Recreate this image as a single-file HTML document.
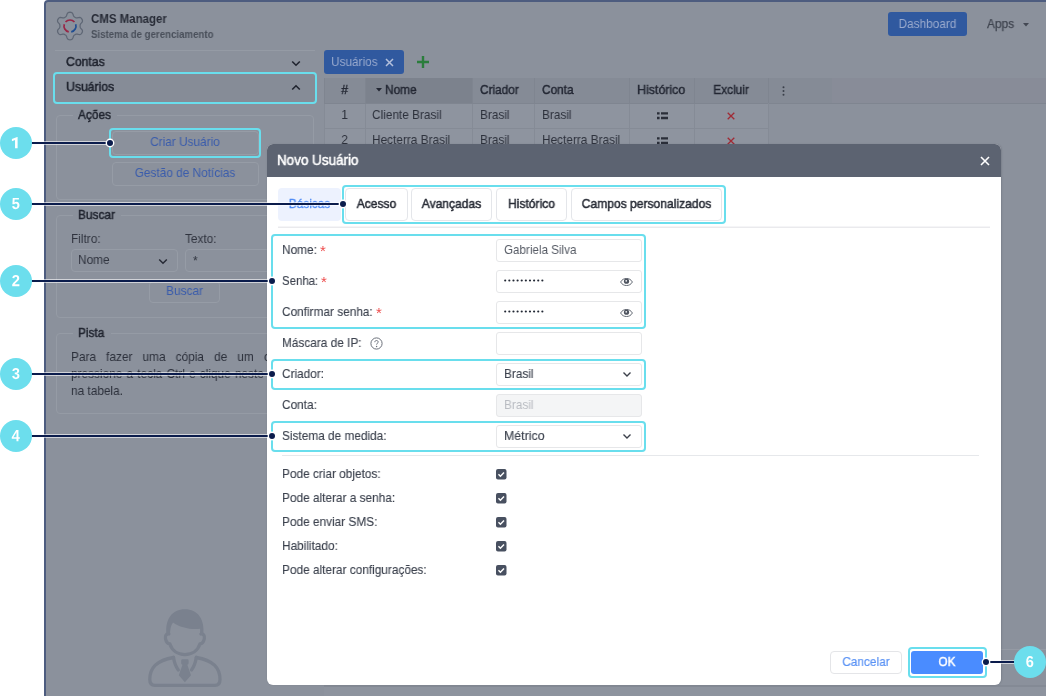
<!DOCTYPE html>
<html>
<head>
<meta charset="utf-8">
<title>CMS Manager</title>
<style>
*{box-sizing:border-box;margin:0;padding:0}
html,body{width:1046px;height:696px;overflow:hidden;background:#fff}
body{font-family:"Liberation Sans",sans-serif;font-size:13px;color:#2b2f3a;position:relative}
.abs{position:absolute}
#app{position:absolute;left:44px;top:0px;width:1010px;height:705px;background:#8b919c;border:2px solid #4d5c7f;border-radius:4px 0 0 0}
/* text helper: absolutely positioned, vertically centred on its top+8 line */
.t{will-change:transform;position:absolute;white-space:nowrap;line-height:16px;height:16px;font-size:13px;transform-origin:0 50%;transform:scaleX(.91)}
.tc{will-change:transform;position:absolute;white-space:nowrap;line-height:16px;height:16px;font-size:13px;text-align:center;transform-origin:50% 50%;transform:scaleX(.91)}
.m{-webkit-text-stroke:.42px currentColor}
.hl{position:absolute;border:2px solid #69deed;border-radius:4px}
.line{position:absolute;height:2px;background:#0b1c4c;box-shadow:0 0 0 .6px #fff}
.dot{position:absolute;width:6px;height:6px;border-radius:50%;background:#0b1c4c;box-shadow:0 0 0 1.400px #fff}
.num{position:absolute;width:32px;height:32px;border-radius:50%;background:#6cdeed;color:#fff;font-weight:400;-webkit-text-stroke:.65px #fff;font-size:15px;line-height:31px;text-align:center}
/* dimmed app */
.fs{position:absolute;border:1px solid #959ba5;border-radius:4px}
.lg{position:absolute;background:#8b919c;height:14px}
.btn{position:absolute;border:1px solid #969ca6;border-radius:4px}
.th{position:absolute;top:78px;height:25px;background:#858b96;border-left:1px solid #7f8590}
.td{position:absolute;height:25px;background:#8e949f;border-left:1px solid #858b96;border-bottom:1px solid #858b96}
/* dialog */
#dlg{position:absolute;left:267px;top:144px;width:734px;height:541px;background:#fff;border-radius:6px;overflow:hidden;box-shadow:.5px 0 1.500px rgba(45,50,65,.16)}
#dlgt{position:absolute;left:0;top:0;width:734px;height:33px;background:#5c6371}
.tab{position:absolute;top:188px;height:33px;border:1px solid #e4e6ea;border-radius:4px;background:#fff}
.inp{position:absolute;left:496px;width:146px;height:23px;border:1px solid #e6e7e9;border-radius:3px;background:#fff}
.cb{position:absolute;left:496px;width:11px;height:11px;border-radius:2px;background:#454d5b}
</style>
</head>
<body>

<div id="app"></div>

<!-- ===== header ===== -->
<svg class="abs" style="left:56px;top:11px" width="28" height="30" viewBox="0 0 28 30">
  <path d="M24.1 15.0L24.1 14.3L24.2 13.7L24.6 12.9L25.5 11.9L26.3 10.8L26.5 9.8L26.3 8.9L25.9 8.1L25.4 7.4L24.7 6.8L23.8 6.4L22.4 6.6L21.1 6.9L20.3 6.9L19.6 6.6L19.0 6.3L18.5 5.9L17.9 5.5L17.5 4.8L17.1 3.5L16.5 2.3L15.8 1.6L14.9 1.3L14.0 1.2L13.1 1.3L12.2 1.6L11.5 2.3L10.9 3.5L10.5 4.8L10.1 5.5L9.5 5.9L9.0 6.3L8.4 6.6L7.7 6.9L6.9 6.9L5.6 6.6L4.2 6.4L3.3 6.8L2.6 7.4L2.1 8.1L1.7 8.9L1.5 9.8L1.7 10.8L2.5 11.9L3.4 12.9L3.8 13.7L3.9 14.3L3.9 15.0L3.9 15.7L3.8 16.3L3.4 17.1L2.5 18.1L1.7 19.2L1.5 20.2L1.7 21.1L2.1 21.9L2.6 22.6L3.3 23.2L4.2 23.6L5.6 23.4L6.9 23.1L7.7 23.1L8.4 23.4L9.0 23.7L9.5 24.1L10.1 24.5L10.5 25.2L10.9 26.5L11.5 27.7L12.2 28.4L13.1 28.7L14.0 28.8L14.9 28.7L15.8 28.4L16.5 27.7L17.1 26.5L17.5 25.2L17.9 24.5L18.5 24.1L19.0 23.7L19.6 23.4L20.3 23.1L21.1 23.1L22.4 23.4L23.8 23.6L24.7 23.2L25.4 22.6L25.9 21.9L26.3 21.1L26.5 20.2L26.3 19.2L25.5 18.1L24.6 17.1L24.2 16.3L24.1 15.7Z" fill="none" stroke="#5f6775" stroke-width="1.250" stroke-linejoin="round"/>
  <path d="M18.46 10.99A6 6 0 0 0 9.54 10.99" fill="none" stroke="#982646" stroke-width="1.700"/>
  <path d="M8.29 13.15A6 6 0 0 0 12.75 20.87" fill="none" stroke="#982646" stroke-width="1.700"/>
  <path d="M15.25 20.87A6 6 0 0 0 19.71 13.15" fill="none" stroke="#1f4d92" stroke-width="1.700"/>
</svg>
<div class="t" style="left:91px;top:11px;font-size:12px;font-weight:700;color:#272b36;transform:scaleX(.955)">CMS Manager</div>
<div class="t" style="left:91px;top:26px;font-size:10.500px;font-weight:700;color:#4a505b;transform:scaleX(.92)">Sistema de gerenciamento</div>

<div class="abs" style="left:888px;top:12px;width:79px;height:24px;border-radius:3px;background:#30599f"></div>
<div class="tc" style="left:888px;top:16px;width:79px;color:#9aaacd">Dashboard</div>
<div class="t" style="left:987px;top:16px;color:#3f444f;-webkit-text-stroke:.25px #3f444f">Apps</div>
<svg class="abs" style="left:1023px;top:23px" width="6" height="4" viewBox="0 0 6 4"><path d="M0 0h6L3 3.500z" fill="#434853"/></svg>

<!-- ===== left panel ===== -->
<div class="abs" style="left:55px;top:50px;width:260px;height:1px;background:#959ba5"></div>
<div class="t" style="left:66px;top:54px;color:#20242f;-webkit-text-stroke:.5px #20242f;transform:scaleX(.94)">Contas</div>
<svg class="abs" style="left:291px;top:60px" width="10" height="7" viewBox="0 0 10 7"><path d="M1.200 1.500L5 5.200l3.800-3.700" fill="none" stroke="#20242f" stroke-width="1.600"/></svg>
<div class="abs" style="left:55px;top:74px;width:260px;height:28px;background:#868c97"></div>
<div class="t" style="left:66px;top:79px;color:#20242f;-webkit-text-stroke:.5px #20242f;transform:scaleX(.94)">Usuários</div>
<svg class="abs" style="left:291px;top:84px" width="10" height="7" viewBox="0 0 10 7"><path d="M1.200 5.500L5 1.800l3.800 3.700" fill="none" stroke="#20242f" stroke-width="1.600"/></svg>

<!-- fieldset Ações -->
<div class="fs" style="left:56px;top:115px;width:258px;height:85px"></div>
<div class="lg" style="left:73px;top:108px;width:44px"></div>
<div class="t" style="left:78px;top:107px;color:#222631;-webkit-text-stroke:.48px #222631">Ações</div>
<div class="btn" style="left:112px;top:131px;width:147px;height:24px"></div>
<div class="tc" style="left:112px;top:134px;width:146px;color:#3a5cac">Criar Usuário</div>
<div class="btn" style="left:112px;top:162px;width:147px;height:24px"></div>
<div class="tc" style="left:112px;top:165px;width:146px;color:#3a5cac">Gestão de Notícias</div>

<!-- fieldset Buscar -->
<div class="fs" style="left:56px;top:215px;width:258px;height:103px"></div>
<div class="lg" style="left:73px;top:208px;width:48px"></div>
<div class="t" style="left:78px;top:207px;color:#222631;-webkit-text-stroke:.48px #222631">Buscar</div>
<div class="t" style="left:71px;top:231px;color:#30343f">Filtro:</div>
<div class="t" style="left:185px;top:231px;color:#30343f">Texto:</div>
<div class="btn" style="left:71px;top:249px;width:107px;height:23px"></div>
<div class="t" style="left:78px;top:252px;color:#30343f">Nome</div>
<svg class="abs" style="left:158px;top:258px" width="10" height="7" viewBox="0 0 10 7"><path d="M1.200 1.500L5 5.200l3.800-3.700" fill="none" stroke="#262a35" stroke-width="1.500"/></svg>
<div class="btn" style="left:185px;top:249px;width:115px;height:23px"></div>
<div class="t" style="left:193px;top:253px;color:#30343f">*</div>
<div class="btn" style="left:149px;top:281px;width:71px;height:22px"></div>
<div class="tc" style="left:149px;top:283px;width:71px;color:#3a5cac">Buscar</div>

<!-- fieldset Pista -->
<div class="fs" style="left:56px;top:333px;width:258px;height:81px"></div>
<div class="lg" style="left:73px;top:326px;width:38px"></div>
<div class="t" style="left:78px;top:325px;color:#222631;-webkit-text-stroke:.48px #222631">Pista</div>
<div class="t" style="left:71px;top:349px;color:#2c303b;word-spacing:7.500px">Para fazer uma cópia de um c</div>
<div class="t" style="left:71px;top:366px;color:#2c303b;word-spacing:1px">pressione a tecla Ctrl e clique neste</div>
<div class="t" style="left:71px;top:383px;color:#2c303b">na tabela.</div>

<!-- user silhouette -->
<svg class="abs" style="left:146px;top:606px" width="78" height="84" viewBox="0 0 78 84">
  <g fill="none" stroke="#7a818e" stroke-width="3.300" stroke-linecap="round" stroke-linejoin="round">
    <path d="M22.800 28c-2.600-.6-3.900 1.800-3.300 4.800s2.300 5 4.400 5.200c2.100 6.600 7.800 10.600 15 10.600s12.900-4 15-10.600c2.100-.2 3.800-2.200 4.400-5.200s-.7-5.400-3.300-4.800"/>
    <path d="M27.500 51.500C10 54.500 3.800 62 3.800 73.500c0 3.800 1.800 5.800 5 5.800h60.200c3.200 0 5-2 5-5.800C74 62 67.800 54.500 50.300 51.500"/>
    <path d="M27.500 51.500c.8 5 2.600 9.500 4.800 12.500M50.300 51.500c-.8 5-2.600 9.500-4.800 12.500"/>
  </g>
  <path d="M20.700 29.500C18.300 13 26.500 3.200 38.900 3.200S59.500 13 57.100 29.500l-3.400-.9c.5-2.200.6-4 .3-5.800C45.500 24 33.500 21.500 27 16.500c-2.300 3.200-3.100 7.400-2.900 12.100z" fill="#7a818e"/>
  <path d="M36.600 53.200h4.600q1.400 0 1.400 1.400v2.600q0 1.400-1.300 1.600l3.700 10.400-6.100 7-6.100-7 3.700-10.400q-1.300-.2-1.300-1.600v-2.600q0-1.400 1.400-1.400z" fill="#7a818e"/>
</svg>

<!-- ===== tab + table ===== -->
<div class="abs" style="left:324px;top:50px;width:80px;height:24px;border-radius:3px;background:#30599f"></div>
<div class="t" style="left:331px;top:54px;color:#98a9cd">Usuários</div>
<svg class="abs" style="left:385px;top:58px" width="9" height="9" viewBox="0 0 9 9"><path d="M1 1l7 7M8 1L1 8" stroke="#b4c0dc" stroke-width="1.500"/></svg>
<svg class="abs" style="left:417px;top:56px" width="12" height="12" viewBox="0 0 12 12"><path d="M6 0v12M0 6h12" stroke="#2b7d3c" stroke-width="2.400"/></svg>

<div class="th" style="left:324px;width:41px"></div>
<div class="th" style="left:365px;width:107px;background:#7c828d"></div>
<div class="th" style="left:472px;width:62px"></div>
<div class="th" style="left:534px;width:95px"></div>
<div class="th" style="left:629px;width:65px"></div>
<div class="th" style="left:694px;width:74px"></div>
<div class="th" style="left:768px;width:64px"></div>
<div class="th" style="left:832px;width:214px;background:#888c98;border-left:none"></div>
<div class="abs" style="left:324px;top:103px;width:722px;height:1px;background:#7f8590"></div>

<div class="tc m" style="left:324px;top:82px;width:41px;color:#232733">#</div>
<svg class="abs" style="left:376px;top:88px" width="6" height="4" viewBox="0 0 6 4"><path d="M0 0h6L3 3.500z" fill="#232733"/></svg>
<div class="t m" style="left:385px;top:82px;color:#232733">Nome</div>
<div class="t m" style="left:480px;top:82px;color:#232733">Criador</div>
<div class="t m" style="left:542px;top:82px;color:#232733">Conta</div>
<div class="t m" style="left:637px;top:82px;color:#232733;transform:scaleX(.955)">Histórico</div>
<div class="tc m" style="left:694px;top:82px;width:74px;color:#232733">Excluir</div>
<svg class="abs" style="left:782px;top:86px" width="3" height="10" viewBox="0 0 3 10"><circle cx="1.500" cy="1.200" r="1" fill="#3a3f4a"/><circle cx="1.500" cy="5" r="1" fill="#3a3f4a"/><circle cx="1.500" cy="8.800" r="1" fill="#3a3f4a"/></svg>

<!-- rows -->
<div class="td" style="left:324px;top:104px;width:41px"></div>
<div class="td" style="left:365px;top:104px;width:107px"></div>
<div class="td" style="left:472px;top:104px;width:62px"></div>
<div class="td" style="left:534px;top:104px;width:95px"></div>
<div class="td" style="left:629px;top:104px;width:65px"></div>
<div class="td" style="left:694px;top:104px;width:74px"></div>
<div class="td" style="left:324px;top:129px;width:41px"></div>
<div class="td" style="left:365px;top:129px;width:107px"></div>
<div class="td" style="left:472px;top:129px;width:62px"></div>
<div class="td" style="left:534px;top:129px;width:95px"></div>
<div class="td" style="left:629px;top:129px;width:65px"></div>
<div class="td" style="left:694px;top:129px;width:74px"></div>

<div class="abs" style="left:768px;top:103px;width:1px;height:50px;background:#858b96"></div>
<div class="tc" style="left:324px;top:107px;width:41px;color:#2d313c">1</div>
<div class="t" style="left:372px;top:107px;color:#2d313c">Cliente Brasil</div>
<div class="t" style="left:480px;top:107px;color:#2d313c">Brasil</div>
<div class="t" style="left:542px;top:107px;color:#2d313c">Brasil</div>
<div class="tc" style="left:324px;top:132px;width:41px;color:#2d313c">2</div>
<div class="t" style="left:372px;top:132px;color:#2d313c">Hecterra Brasil</div>
<div class="t" style="left:480px;top:132px;color:#2d313c">Brasil</div>
<div class="t" style="left:542px;top:132px;color:#2d313c">Hecterra Brasil</div>

<svg class="abs" style="left:657px;top:112px" width="11" height="8" viewBox="0 0 11 8"><path d="M0 1.400h2.600M4 1.400H11M0 6h2.600M4 6H11" stroke="#2a2e39" stroke-width="2.300"/></svg>
<svg class="abs" style="left:657px;top:137px" width="11" height="8" viewBox="0 0 11 8"><path d="M0 1.400h2.600M4 1.400H11M0 6h2.600M4 6H11" stroke="#2a2e39" stroke-width="2.300"/></svg>
<svg class="abs" style="left:727px;top:112px" width="8" height="8" viewBox="0 0 8 8"><path d="M.7.7l6.600 6.600M7.300.7L.7 7.300" stroke="#a02a35" stroke-width="1.300"/></svg>
<svg class="abs" style="left:727px;top:137px" width="8" height="8" viewBox="0 0 8 8"><path d="M.7.7l6.600 6.600M7.300.7L.7 7.300" stroke="#a02a35" stroke-width="1.300"/></svg>

<!-- faint bottom lines of grid -->
<div class="abs" style="left:1000px;top:649px;width:46px;height:1px;background:#959aa4"></div>
<div class="abs" style="left:324px;top:685px;width:722px;height:2px;background:#848a95"></div>
<div class="abs" style="left:324px;top:687px;width:722px;height:9px;background:#8d939e"></div>

<!-- ===== dialog ===== -->
<div id="dlg"><div id="dlgt"></div></div>
<div class="t" style="left:277px;top:152px;font-size:14px;color:#fff;-webkit-text-stroke:.5px #fff;transform:scaleX(.96)">Novo Usuário</div>
<svg class="abs" style="left:980px;top:156px" width="10" height="10" viewBox="0 0 10 10"><path d="M1 1l8 8M9 1L1 9" stroke="#fff" stroke-width="1.600"/></svg>

<!-- tabs -->
<div class="abs" style="left:278px;top:188px;width:63px;height:33px;border-radius:4px;background:#edf2fe"></div>
<div class="tc" style="left:278px;top:196px;width:63px;color:#4f8cf6;-webkit-text-stroke:.3px #4f8cf6">Básicas</div>
<div class="tab" style="left:345px;width:63px"></div>
<div class="tab" style="left:411px;width:81px"></div>
<div class="tab" style="left:496px;width:71px"></div>
<div class="tab" style="left:571px;width:151px"></div>
<div class="tc" style="left:345px;top:196px;width:63px;color:#282c36;-webkit-text-stroke:.5px #282c36;transform:scaleX(.93)">Acesso</div>
<div class="tc" style="left:411px;top:196px;width:81px;color:#282c36;-webkit-text-stroke:.5px #282c36;transform:scaleX(.93)">Avançadas</div>
<div class="tc" style="left:496px;top:196px;width:71px;color:#282c36;-webkit-text-stroke:.5px #282c36;transform:scaleX(.93)">Histórico</div>
<div class="tc" style="left:571px;top:196px;width:151px;color:#282c36;-webkit-text-stroke:.5px #282c36;transform:scaleX(.93)">Campos personalizados</div>
<div class="abs" style="left:278px;top:226px;width:712px;height:1px;background:#f5f5f7"></div>
<div class="abs" style="left:278px;top:227px;width:712px;height:1px;background:#eaeaed"></div>

<!-- form rows -->
<div class="t" style="left:282px;top:242px;color:#3c424e;-webkit-text-stroke:.12px #3c424e">Nome:</div>
<div class="t" style="left:320px;top:243px;color:#ee4c4c;font-size:15px;transform:none">*</div>
<div class="t" style="left:282px;top:273px;color:#3c424e;-webkit-text-stroke:.12px #3c424e;transform:scaleX(.88)">Senha:</div>
<div class="t" style="left:321px;top:274px;color:#ee4c4c;font-size:15px;transform:none">*</div>
<div class="t" style="left:282px;top:304px;color:#3c424e;-webkit-text-stroke:.12px #3c424e">Confirmar senha:</div>
<div class="t" style="left:376px;top:305px;color:#ee4c4c;font-size:15px;transform:none">*</div>
<div class="t" style="left:282px;top:335px;color:#3c424e;-webkit-text-stroke:.12px #3c424e">Máscara de IP:</div>
<svg class="abs" style="left:370px;top:337px" width="13" height="13" viewBox="0 0 13 13"><circle cx="6.500" cy="6.500" r="5.600" fill="none" stroke="#6b707a" stroke-width="1"/><path d="M4.800 5.200c0-1.100.8-1.700 1.700-1.700s1.700.6 1.700 1.500c0 1.200-1.600 1.300-1.600 2.600" fill="none" stroke="#6b707a" stroke-width="1"/><circle cx="6.600" cy="9.500" r=".7" fill="#6b707a"/></svg>
<div class="t" style="left:282px;top:366px;color:#3c424e;-webkit-text-stroke:.12px #3c424e">Criador:</div>
<div class="t" style="left:282px;top:397px;color:#3c424e;-webkit-text-stroke:.12px #3c424e">Conta:</div>
<div class="t" style="left:282px;top:428px;color:#3c424e;-webkit-text-stroke:.12px #3c424e">Sistema de medida:</div>

<div class="inp" style="top:239px"></div>
<div class="inp" style="top:270px"></div>
<div class="inp" style="top:301px"></div>
<div class="inp" style="top:332px"></div>
<div class="inp" style="top:363px"></div>
<div class="inp" style="top:394px;background:#f4f5f6"></div>
<div class="inp" style="top:425px"></div>
<div class="t" style="left:504px;top:242px;color:#555a64;transform:scaleX(.895)">Gabriela Silva</div>
<svg class="abs" style="left:504px;top:279px" width="42" height="3" viewBox="0 0 42 3" fill="#222834"><circle cx="1.20" cy="1.500" r="1.080"/><circle cx="5.33" cy="1.500" r="1.080"/><circle cx="9.46" cy="1.500" r="1.080"/><circle cx="13.59" cy="1.500" r="1.080"/><circle cx="17.72" cy="1.500" r="1.080"/><circle cx="21.85" cy="1.500" r="1.080"/><circle cx="25.98" cy="1.500" r="1.080"/><circle cx="30.11" cy="1.500" r="1.080"/><circle cx="34.24" cy="1.500" r="1.080"/><circle cx="38.37" cy="1.500" r="1.080"/></svg>
<svg class="abs" style="left:504px;top:310px" width="42" height="3" viewBox="0 0 42 3" fill="#222834"><circle cx="1.20" cy="1.500" r="1.080"/><circle cx="5.33" cy="1.500" r="1.080"/><circle cx="9.46" cy="1.500" r="1.080"/><circle cx="13.59" cy="1.500" r="1.080"/><circle cx="17.72" cy="1.500" r="1.080"/><circle cx="21.85" cy="1.500" r="1.080"/><circle cx="25.98" cy="1.500" r="1.080"/><circle cx="30.11" cy="1.500" r="1.080"/><circle cx="34.24" cy="1.500" r="1.080"/><circle cx="38.37" cy="1.500" r="1.080"/></svg>
<div class="t" style="left:504px;top:366px;color:#3c424e;-webkit-text-stroke:.12px #3c424e">Brasil</div>
<div class="t" style="left:504px;top:397px;color:#b9bcc2">Brasil</div>
<div class="t" style="left:504px;top:428px;color:#3c424e;-webkit-text-stroke:.12px #3c424e;transform:scaleX(.95)">Métrico</div>
<svg class="abs" style="left:622px;top:371px" width="10" height="7" viewBox="0 0 10 7"><path d="M1.500 1.500L5 5l3.500-3.500" fill="none" stroke="#3c414b" stroke-width="1.400"/></svg>
<svg class="abs" style="left:622px;top:433px" width="10" height="7" viewBox="0 0 10 7"><path d="M1.500 1.500L5 5l3.500-3.500" fill="none" stroke="#3c414b" stroke-width="1.400"/></svg>
<!-- eyes -->
<svg class="abs" style="left:620px;top:277px" width="13" height="10" viewBox="0 -0.5 13 10"><path d="M.6 4.500C2.100 1.900 4.100 1 6.500 1s4.400.9 5.900 3.500C10.900 7.100 8.900 8 6.500 8S2.100 7.100.6 4.500z" fill="none" stroke="#5c626d" stroke-width=".95"/><circle cx="6.500" cy="3.700" r="2.600" fill="#4f5560"/><rect x="5.500" y="2.600" width="1.500" height="1.500" fill="#f2f3f5"/></svg>
<svg class="abs" style="left:620px;top:308px" width="13" height="10" viewBox="0 -0.5 13 10"><path d="M.6 4.500C2.100 1.900 4.100 1 6.500 1s4.400.9 5.900 3.500C10.900 7.100 8.900 8 6.500 8S2.100 7.100.6 4.500z" fill="none" stroke="#5c626d" stroke-width=".95"/><circle cx="6.500" cy="3.700" r="2.600" fill="#4f5560"/><rect x="5.500" y="2.600" width="1.500" height="1.500" fill="#f2f3f5"/></svg>

<div class="abs" style="left:282px;top:455px;width:697px;height:1px;background:#e6e8eb"></div>

<!-- checkboxes -->
<div class="t" style="left:282px;top:466px;color:#3c424e;-webkit-text-stroke:.12px #3c424e">Pode criar objetos:</div>
<div class="t" style="left:282px;top:490px;color:#3c424e;-webkit-text-stroke:.12px #3c424e">Pode alterar a senha:</div>
<div class="t" style="left:282px;top:514px;color:#3c424e;-webkit-text-stroke:.12px #3c424e">Pode enviar SMS:</div>
<div class="t" style="left:282px;top:538px;color:#3c424e;-webkit-text-stroke:.12px #3c424e">Habilitado:</div>
<div class="t" style="left:282px;top:562px;color:#3c424e;-webkit-text-stroke:.12px #3c424e">Pode alterar configurações:</div>
<svg class="abs" style="left:496px;top:469px" width="10.500" height="10.500" viewBox="0 0 11 11"><rect width="11" height="11" rx="2" fill="#485060"/><path d="M2.600 5.600l2 2 3.800-4" fill="none" stroke="#fff" stroke-width="1.500"/></svg>
<svg class="abs" style="left:496px;top:493px" width="10.500" height="10.500" viewBox="0 0 11 11"><rect width="11" height="11" rx="2" fill="#485060"/><path d="M2.600 5.600l2 2 3.800-4" fill="none" stroke="#fff" stroke-width="1.500"/></svg>
<svg class="abs" style="left:496px;top:517px" width="10.500" height="10.500" viewBox="0 0 11 11"><rect width="11" height="11" rx="2" fill="#485060"/><path d="M2.600 5.600l2 2 3.800-4" fill="none" stroke="#fff" stroke-width="1.500"/></svg>
<svg class="abs" style="left:496px;top:541px" width="10.500" height="10.500" viewBox="0 0 11 11"><rect width="11" height="11" rx="2" fill="#485060"/><path d="M2.600 5.600l2 2 3.800-4" fill="none" stroke="#fff" stroke-width="1.500"/></svg>
<svg class="abs" style="left:496px;top:565px" width="10.500" height="10.500" viewBox="0 0 11 11"><rect width="11" height="11" rx="2" fill="#485060"/><path d="M2.600 5.600l2 2 3.800-4" fill="none" stroke="#fff" stroke-width="1.500"/></svg>

<!-- buttons -->
<div class="abs" style="left:830px;top:651px;width:72px;height:23px;border:1px solid #e4e5e8;border-radius:4px;background:#fff"></div>
<div class="tc" style="left:830px;top:654px;width:72px;color:#5b93f5;-webkit-text-stroke:.2px #5b93f5">Cancelar</div>
<div class="abs" style="left:911px;top:651px;width:72px;height:23px;border-radius:3px;background:#4a8cff"></div>
<div class="tc" style="left:911px;top:654px;width:72px;color:#fff;-webkit-text-stroke:.5px #fff;transform:scaleX(.9)">OK</div>

<!-- ===== callouts ===== -->
<div class="hl" style="left:53px;top:72px;width:264px;height:32px"></div>
<div class="hl" style="left:109px;top:128px;width:152px;height:30px"></div>
<div class="hl" style="left:342px;top:185px;width:384px;height:39px"></div>
<div class="hl" style="left:271px;top:234px;width:375px;height:95px"></div>
<div class="hl" style="left:271px;top:359px;width:375px;height:31px"></div>
<div class="hl" style="left:271px;top:421px;width:375px;height:31px"></div>
<div class="hl" style="left:908px;top:647px;width:79px;height:31px"></div>

<div class="line" style="left:30px;top:142px;width:80px"></div>
<div class="line" style="left:30px;top:203px;width:313px"></div>
<div class="line" style="left:30px;top:280px;width:242px"></div>
<div class="line" style="left:30px;top:373px;width:242px"></div>
<div class="line" style="left:30px;top:435px;width:242px"></div>
<div class="line" style="left:986px;top:661px;width:30px"></div>
<div class="dot" style="left:107px;top:140px"></div>
<div class="dot" style="left:340px;top:201px"></div>
<div class="dot" style="left:269px;top:278px"></div>
<div class="dot" style="left:269px;top:371px"></div>
<div class="dot" style="left:269px;top:433px"></div>
<div class="dot" style="left:983px;top:659px"></div>
<div class="num" style="left:0;top:127px"><svg style="position:absolute;left:0;top:0" width="32" height="32" viewBox="0 0 32 32"><path d="M17.600 10.100V21.200H15.050V13.100L11.900 14.200V12.100L17.200 10.100z" fill="#fff"/></svg></div>
<div class="num" style="left:0;top:188px"><svg style="position:absolute;left:0;top:0" width="32" height="32" viewBox="0 0 32 32"><path d="M19.51 17.32Q19.51 19.07 18.5 20.11Q17.48 21.15 15.71 21.15Q14.16 21.15 13.23 20.4Q12.3 19.65 12.09 18.23L14.13 18.05Q14.29 18.76 14.7 19.08Q15.11 19.4 15.73 19.4Q16.5 19.4 16.95 18.88Q17.41 18.35 17.41 17.36Q17.41 16.49 16.98 15.97Q16.55 15.45 15.77 15.45Q14.92 15.45 14.38 16.17H12.39L12.74 9.95H18.92V11.59H14.6L14.43 14.38Q15.18 13.67 16.29 13.67Q17.76 13.67 18.64 14.65Q19.51 15.63 19.51 17.32Z" fill="#fff"/></svg></div>
<div class="num" style="left:0;top:265px"><svg style="position:absolute;left:0;top:0" width="32" height="32" viewBox="0 0 32 32"><path d="M12.21 21.15V19.62Q12.61 18.68 13.35 17.77Q14.09 16.87 15.21 15.89Q16.29 14.95 16.72 14.34Q17.15 13.73 17.15 13.15Q17.15 11.7 15.81 11.7Q15.15 11.7 14.81 12.08Q14.46 12.46 14.36 13.22L12.3 13.1Q12.47 11.56 13.36 10.76Q14.26 9.95 15.79 9.95Q17.45 9.95 18.34 10.76Q19.23 11.58 19.23 13.05Q19.23 13.83 18.95 14.45Q18.66 15.08 18.22 15.61Q17.77 16.14 17.23 16.6Q16.69 17.06 16.18 17.5Q15.67 17.94 15.25 18.39Q14.83 18.83 14.63 19.34H19.39V21.15Z" fill="#fff"/></svg></div>
<div class="num" style="left:0;top:358px"><svg style="position:absolute;left:0;top:0" width="32" height="32" viewBox="0 0 32 32"><path d="M19.45 17.96Q19.45 19.49 18.52 20.32Q17.58 21.15 15.86 21.15Q14.24 21.15 13.28 20.34Q12.32 19.54 12.15 18.02L14.2 17.83Q14.39 19.39 15.86 19.39Q16.58 19.39 16.98 19.01Q17.38 18.62 17.38 17.83Q17.38 17.1 16.9 16.72Q16.41 16.33 15.45 16.33H14.75V14.58H15.41Q16.27 14.58 16.71 14.2Q17.15 13.82 17.15 13.11Q17.15 12.44 16.8 12.06Q16.45 11.68 15.79 11.68Q15.16 11.68 14.78 12.05Q14.39 12.42 14.34 13.09L12.32 12.94Q12.48 11.54 13.41 10.74Q14.33 9.95 15.82 9.95Q17.41 9.95 18.3 10.72Q19.19 11.48 19.19 12.84Q19.19 13.86 18.64 14.51Q18.08 15.17 17.03 15.38V15.42Q18.19 15.56 18.82 16.24Q19.45 16.91 19.45 17.96Z" fill="#fff"/></svg></div>
<div class="num" style="left:0;top:420px"><svg style="position:absolute;left:0;top:0" width="32" height="32" viewBox="0 0 32 32"><path d="M18.46 18.87V21.15H16.48V18.87H11.75V17.19L16.14 9.95H18.46V17.21H19.85V18.87ZM16.48 13.54Q16.48 13.11 16.51 12.61Q16.54 12.11 16.55 11.97Q16.36 12.41 15.86 13.26L13.44 17.21H16.48Z" fill="#fff"/></svg></div>
<div class="num" style="left:1014px;top:646px"><svg style="position:absolute;left:0;top:0" width="32" height="32" viewBox="0 0 32 32"><path d="M19.36 17.43Q19.36 19.17 18.45 20.16Q17.55 21.15 15.95 21.15Q14.16 21.15 13.2 19.8Q12.24 18.45 12.24 15.8Q12.24 12.89 13.22 11.42Q14.19 9.95 16 9.95Q17.29 9.95 18.03 10.56Q18.77 11.17 19.08 12.45L17.18 12.74Q16.91 11.66 15.96 11.66Q15.15 11.66 14.68 12.54Q14.22 13.41 14.22 15.19Q14.54 14.61 15.12 14.3Q15.69 13.99 16.42 13.99Q17.78 13.99 18.57 14.92Q19.36 15.84 19.36 17.43ZM17.33 17.5Q17.33 16.57 16.93 16.08Q16.53 15.59 15.84 15.59Q15.17 15.59 14.77 16.05Q14.36 16.51 14.36 17.26Q14.36 18.21 14.78 18.84Q15.2 19.46 15.89 19.46Q16.57 19.46 16.95 18.94Q17.33 18.42 17.33 17.5Z" fill="#fff"/></svg></div>

</body>
</html>
